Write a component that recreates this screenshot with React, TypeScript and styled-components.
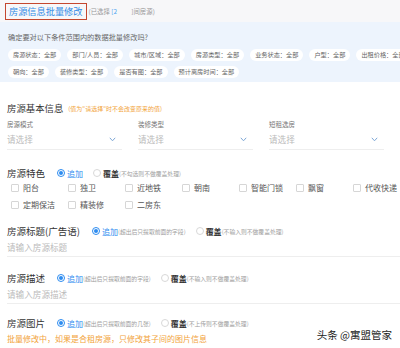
import React from 'react';
import styled, { createGlobalStyle } from 'styled-components';

const GlobalStyle = createGlobalStyle`
  html, body {
    margin: 0;
    padding: 0;
    background: #fff;
  }
  body {
    font-family: "Noto Sans CJK SC", "Noto Sans", sans-serif;
  }
`;

const Page = styled.div`
  position: relative;
  width: 400px;
  height: 348px;
  overflow: hidden;
  background: #fff;
`;

const Header = styled.div`
  height: 22px;
  display: flex;
  align-items: center;
  padding-left: 5px;
  background: #f7f7f9;
`;

const TitleBox = styled.div`
  height: 17px;
  box-sizing: border-box;
  display: flex;
  align-items: center;
  padding: 0 3px;
  border: 1.5px solid #c4472f;
  color: #2f8ae6;
  font-size: 9.2px;
`;

const SelectedNote = styled.span`
  margin-left: 2px;
  font-size: 6.4px;
  color: #999;
  white-space: pre;

  b {
    font-weight: normal;
    color: #4aa3f0;
  }
`;

const Panel = styled.div`
  height: 60px;
  box-sizing: border-box;
  padding: 10px 8px 0;
  background: #edf4fd;
`;

const Question = styled.div`
  font-size: 7.2px;
  line-height: 10px;
  color: #666;
  margin-bottom: 7px;
`;

const ChipRow = styled.div`
  display: flex;
  gap: 6px;
  margin-bottom: 5px;
`;

const Chip = styled.span`
  flex-shrink: 0;
  height: 12px;
  line-height: 12px;
  padding: 0 5px;
  border-radius: 6px;
  background: #fff;
  font-size: 6.2px;
  color: #666;
  white-space: nowrap;
`;

const Body = styled.div`
  padding: 0 7px;
`;

const SectionHead = styled.div`
  margin-top: 19px;
  height: 14px;
  display: flex;
  align-items: center;
  font-size: 9.4px;
  color: #333;
`;

const OrangeNote = styled.span<{ $size?: number }>`
  margin-left: 5px;
  font-size: ${p => p.$size ?? 6}px;
  color: #f2a33a;
`;

const Fields = styled.div`
  display: grid;
  grid-template-columns: repeat(3, 115px);
  column-gap: 16px;
  margin-top: 4px;
`;

const FieldLabel = styled.div`
  font-size: 6.5px;
  line-height: 10px;
  color: #777;
`;

const Select = styled.div`
  height: 21px;
  box-sizing: border-box;
  display: flex;
  align-items: center;
  justify-content: space-between;
  padding-right: 6px;
  border-bottom: 1px solid #eee;
`;

const Placeholder = styled.span`
  font-size: 8.6px;
  color: #bbb;
`;

const OptionRow = styled.div<{ $top: number }>`
  margin-top: ${p => p.$top}px;
  height: 14px;
  display: flex;
  align-items: center;
  gap: 12px;
`;

const RowLabel = styled.span`
  font-size: 9.5px;
  color: #333;
  white-space: nowrap;
`;

const RadioGroup = styled.div`
  display: flex;
  align-items: center;
  gap: 10px;
`;

const RadioItem = styled.label`
  display: flex;
  align-items: center;
  white-space: nowrap;
`;

const RadioDot = styled.span<{ $on?: boolean }>`
  width: 8px;
  height: 8px;
  box-sizing: border-box;
  border-radius: 50%;
  border: 1px solid ${p => (p.$on ? '#2d8cf0' : '#d8d8d8')};
  display: flex;
  align-items: center;
  justify-content: center;
  margin-right: 2px;

  &::after {
    content: '';
    width: 4px;
    height: 4px;
    border-radius: 50%;
    background: ${p => (p.$on ? '#2d8cf0' : 'transparent')};
  }
`;

const RadioText = styled.span<{ $on?: boolean }>`
  font-size: 8px;
  color: ${p => (p.$on ? '#2d8cf0' : '#333')};
  font-weight: ${p => (p.$on ? 400 : 600)};
`;

const Hint = styled.span`
  font-size: 5.8px;
  color: #a0a0a0;
`;

const CheckGrid = styled.div`
  display: grid;
  grid-template-columns: repeat(7, 57px);
  grid-auto-rows: 17px;
  padding-left: 4px;
  margin-top: -1px;
`;

const CheckItem = styled.label`
  display: flex;
  align-items: center;
  white-space: nowrap;
`;

const CheckBox = styled.span`
  width: 8px;
  height: 8px;
  box-sizing: border-box;
  border: 1px solid #d6d6d6;
  border-radius: 1px;
  margin-right: 4px;
`;

const CheckText = styled.span`
  font-size: 8px;
  color: #555;
`;

const TextInput = styled.div`
  height: 19px;
  box-sizing: border-box;
  display: flex;
  align-items: center;
  border-bottom: 1px solid #eee;
  margin-right: -7px;
`;

const Warning = styled.div`
  margin-top: 2px;
  font-size: 8px;
  line-height: 13px;
  color: #f2a33a;
  white-space: nowrap;
`;

const Watermark = styled.div`
  position: absolute;
  right: 8px;
  bottom: 6px;
  font-size: 10.5px;
  color: #222;
  text-shadow: 0 0 2px #fff;
`;

const Chevron = () => (
  <svg width="7" height="5" viewBox="0 0 7 5">
    <path d="M0.8 0.8 L3.5 3.8 L6.2 0.8" fill="none" stroke="#7fa8d6" strokeWidth="1" />
  </svg>
);

const Radio = ({ on, text, hint }: { on?: boolean; text: string; hint?: string }) => (
  <RadioItem>
    <RadioDot $on={on} />
    <RadioText $on={on}>{text}</RadioText>
    {hint && <Hint>{hint}</Hint>}
  </RadioItem>
);

const chips1 = ['房源状态：全部', '部门/人员：全部', '城市/区域：全部', '房源类型：全部', '业务状态：全部', '户型：全部', '出租价格：全部'];
const chips2 = ['朝向：全部', '装修类型：全部', '是否有图：全部', '预计离房时间：全部'];
const fields = ['房源模式', '装修类型', '短租选房'];
const features = ['阳台', '独卫', '近地铁', '朝南', '智能门锁', '飘窗', '代收快递', '定期保洁', '精装修', '二房东'];

export default function App() {
  return (
    <Page>
      <GlobalStyle />
      <Header>
        <TitleBox>房源信息批量修改</TitleBox>
        <SelectedNote>
          (已选择 <b>[2</b>{'          '}]间房源)
        </SelectedNote>
      </Header>

      <Panel>
        <Question>确定要对以下条件范围内的数据批量修改吗?</Question>
        <ChipRow>
          {chips1.map(c => (
            <Chip key={c}>{c}</Chip>
          ))}
        </ChipRow>
        <ChipRow>
          {chips2.map(c => (
            <Chip key={c}>{c}</Chip>
          ))}
        </ChipRow>
      </Panel>

      <Body>
        <SectionHead>
          房源基本信息
          <OrangeNote>(值为"请选择"时不会改变原来的值)</OrangeNote>
        </SectionHead>
        <Fields>
          {fields.map(f => (
            <div key={f}>
              <FieldLabel>{f}</FieldLabel>
              <Select>
                <Placeholder>请选择</Placeholder>
                <Chevron />
              </Select>
            </div>
          ))}
        </Fields>

        <OptionRow $top={16}>
          <RowLabel>房源特色</RowLabel>
          <RadioGroup>
            <Radio on text="追加" />
            <Radio text="覆盖" hint="(不勾选则不做覆盖处理)" />
          </RadioGroup>
        </OptionRow>
        <CheckGrid>
          {features.map(f => (
            <CheckItem key={f}>
              <CheckBox />
              <CheckText>{f}</CheckText>
            </CheckItem>
          ))}
        </CheckGrid>

        <OptionRow $top={11}>
          <RowLabel>房源标题(广告语)</RowLabel>
          <RadioGroup>
            <Radio on text="追加" hint="(超出后只提取前面的字段)" />
            <Radio text="覆盖" hint="(不输入则不做覆盖处理)" />
          </RadioGroup>
        </OptionRow>
        <TextInput>
          <Placeholder>请输入房源标题</Placeholder>
        </TextInput>

        <OptionRow $top={14}>
          <RowLabel>房源描述</RowLabel>
          <RadioGroup>
            <Radio on text="追加" hint="(超出后只提取前面的字段)" />
            <Radio text="覆盖" hint="(不输入则不做覆盖处理)" />
          </RadioGroup>
        </OptionRow>
        <TextInput>
          <Placeholder>请输入房源描述</Placeholder>
        </TextInput>

        <OptionRow $top={12}>
          <RowLabel>房源图片</RowLabel>
          <RadioGroup>
            <Radio on text="追加" hint="(超出后只提取前面的几张)" />
            <Radio text="覆盖" hint="(不上传则不做覆盖处理)" />
          </RadioGroup>
        </OptionRow>
        <Warning>批量修改中，如果是合租房源，只修改其子间的图片信息</Warning>
      </Body>

      <Watermark>头条 @寓盟管家</Watermark>
    </Page>
  );
}
